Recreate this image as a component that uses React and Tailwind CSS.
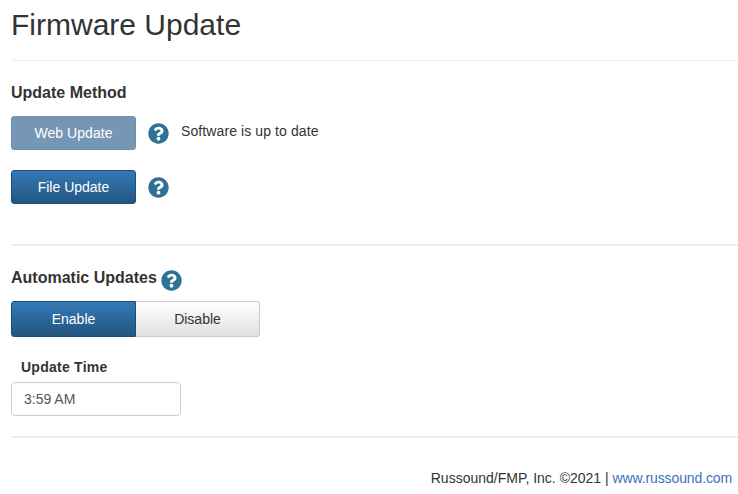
import React from 'react';
import { FaQuestionCircle } from 'react-icons/fa';

const Help = ({ className = '' }) => (
  <FaQuestionCircle className={`text-[#2f7095] shrink-0 ${className}`} size={21} />
);

export default function App() {
  return (
    <div className="w-[738px] h-[494px] overflow-hidden bg-white text-[#333] font-['Liberation_Sans',Arial,sans-serif] text-sm">
      <div className="pl-[11px]">
        <h1 className="text-[30px] leading-[33px] pt-[8px] pb-[19px] border-b border-[#eee]">Firmware Update</h1>
        <h2 className="mt-[23px] text-base leading-[18px] font-bold">Update Method</h2>
        <div className="mt-[14px] flex items-center h-[34px]">
          <button className="w-[125px] h-[34px] rounded-[3px] bg-[#7596b5] border border-[#6f90ae] text-white tracking-[0.05px]">Web Update</button>
          <Help className="ml-[12px] mt-[1px]" />
          <span className="ml-[12px] -mt-[4px] tracking-[0.1px]">Software is up to date</span>
        </div>
        <div className="mt-[20px] flex items-center h-[34px]">
          <button className="w-[125px] h-[34px] rounded-[3px] bg-gradient-to-b from-[#337ab7] to-[#245580] border border-[#204d74] text-white">File Update</button>
          <Help className="ml-[12px]" />
        </div>
        <div className="mt-[40px] border-t-2 border-[#eee]" />
        <div className="mt-[21px] flex items-start h-[24px]">
          <h2 className="mt-[2px] text-base font-bold leading-[18px]">Automatic Updates</h2>
          <Help className="ml-[4px] mt-[3px]" />
        </div>
        <div className="mt-[10px] flex">
          <button className="w-[125px] h-[36px] rounded-l-[3px] bg-gradient-to-b from-[#337ab7] to-[#245580] border border-[#204d74] text-white">Enable</button>
          <button className="w-[124px] h-[36px] rounded-r-[3px] bg-gradient-to-b from-white to-[#e0e0e0] border border-[#ccc] border-l-0">Disable</button>
        </div>
        <div className="mt-[20px] ml-[10px] font-bold leading-[20px] tracking-[0.25px]">Update Time</div>
        <div className="mt-[5px] w-[170px] h-[34px] border border-[#ccc] rounded-[4px] px-3 flex items-center text-[#555]">3:59 AM</div>
        <div className="mt-[20px] border-t-2 border-[#eee]" />
        <div className="mt-[30px] pr-[6px] text-right">
          Russound/FMP, Inc. ©2021 | <span className="text-[#3a72bd] tracking-[-0.12px]">www.russound.com</span>
        </div>
      </div>
    </div>
  );
}
